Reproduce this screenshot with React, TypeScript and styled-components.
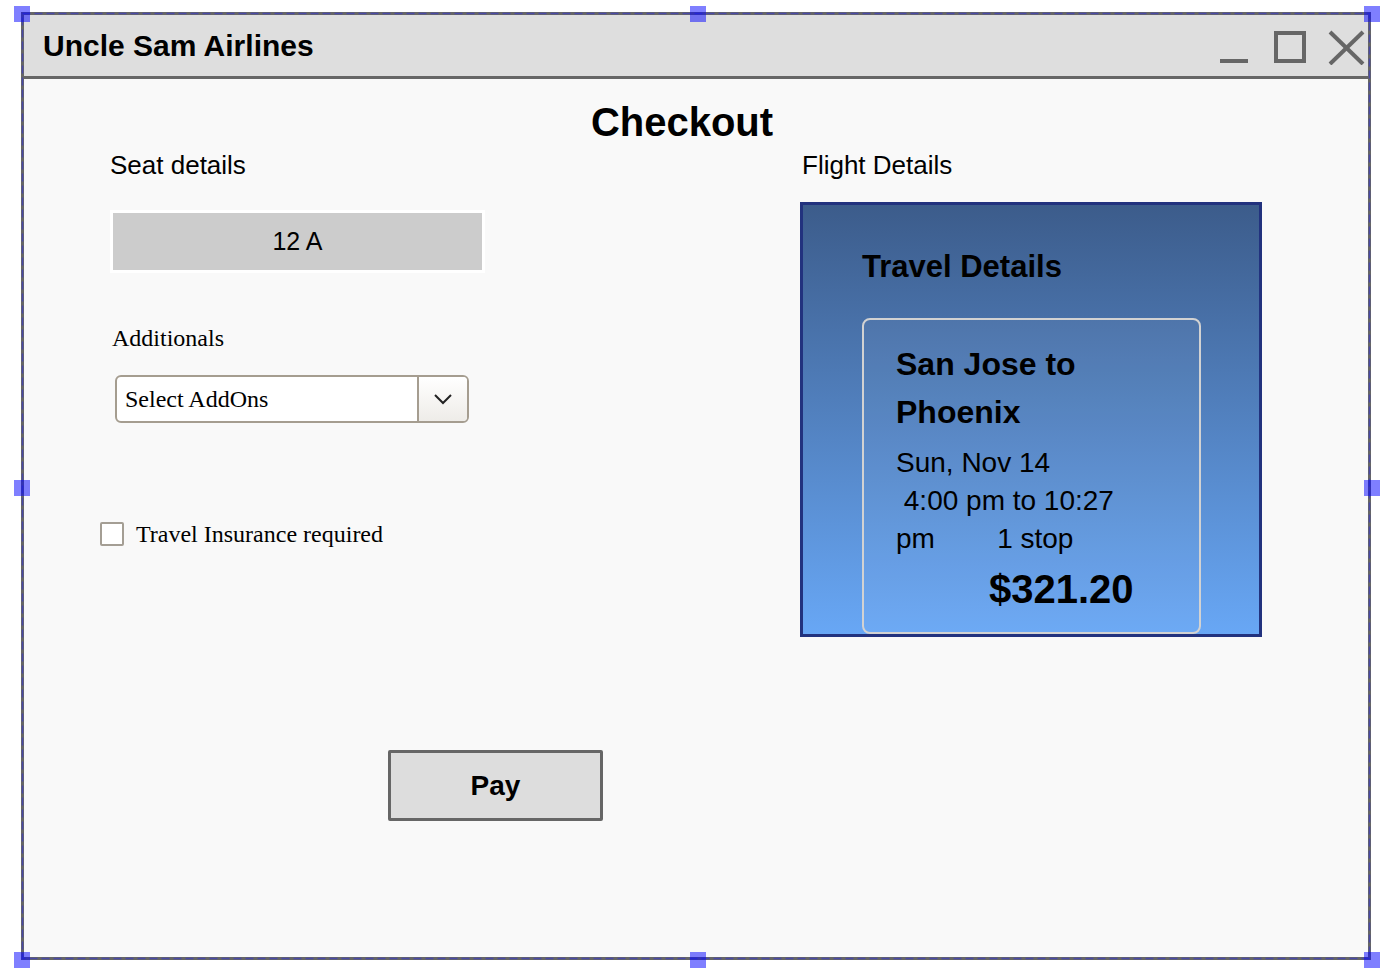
import styled, { createGlobalStyle } from "styled-components";

const GlobalStyle = createGlobalStyle`
    html, body {
        margin: 0;
        padding: 0;
        background-color: #ffffff;
    }
    body {
        padding: 12px 0 14px 21px;
        font-family: "Liberation Sans", Arial, sans-serif;
        color: #000;
    }
`;

const Frame = styled.div`
    position: relative;
    box-sizing: border-box;
    width: 1350px;
    height: 948px;
    border: 3px solid #666;
    background-color: #f9f9f9;
    display: flex;
    flex-direction: column;
`;

const SelectionOutline = styled.svg`
    position: absolute;
    left: -3px;
    top: -3px;
    width: 1350px;
    height: 948px;
    pointer-events: none;
    overflow: visible;
`;

const Handle = styled.div<{ $x: number; $y: number }>`
    position: absolute;
    left: ${(props) => props.$x}px;
    top: ${(props) => props.$y}px;
    width: 16px;
    height: 16px;
    background-color: rgba(0, 0, 255, 0.5);
`;

const TitleBar = styled.div`
    height: 61px;
    display: flex;
    align-items: center;
    justify-content: space-between;
    padding: 0 3px 0 19px;
    background-color: #dedede;
    border-bottom: 3px solid #666;
`;

const AppName = styled.h1`
    margin: 0;
    font-size: 30px;
    font-weight: bold;
    line-height: 34px;
`;

const Controls = styled.svg`
    width: 146px;
    height: 36px;
    margin-top: 2px;
`;

const Heading = styled.h2`
    margin: 21px 28px 0 0;
    font-size: 40px;
    line-height: 45px;
    font-weight: bold;
    text-align: center;
`;

const Columns = styled.div`
    display: grid;
    grid-template-columns: 700px 1fr;
    margin-top: 5px;
    padding-left: 76px;
`;

const LeftColumn = styled.div`
    display: flex;
    flex-direction: column;
    align-items: flex-start;
`;

const RightColumn = styled.div`
    display: flex;
    flex-direction: column;
    align-items: flex-start;
`;

const Label = styled.div<{ $indent: number }>`
    margin-left: ${(props) => props.$indent}px;
    font-size: 26px;
    line-height: 30px;
`;

const SeatBox = styled.div`
    box-sizing: border-box;
    width: 375px;
    height: 63px;
    margin: 30px 0 0 10px;
    border: 3px solid #fff;
    background-color: #cccccc;
    display: flex;
    align-items: center;
    justify-content: center;
    font-size: 25px;
`;

const SerifLabel = styled.div`
    margin: 51px 0 0 12px;
    font-family: "Liberation Serif", "Times New Roman", serif;
    font-size: 24px;
    line-height: 28px;
`;

const SelectBox = styled.div`
    box-sizing: border-box;
    width: 354px;
    height: 48px;
    margin: 23px 0 0 15px;
    display: flex;
    border: 2px solid #a59d90;
    border-radius: 6px;
    background-color: #fff;
    overflow: hidden;
`;

const SelectText = styled.div`
    flex: 1;
    display: flex;
    align-items: center;
    padding-left: 8px;
    font-family: "Liberation Serif", "Times New Roman", serif;
    font-size: 24px;
    border-right: 2px solid #a59d90;
`;

const SelectArrow = styled.div`
    width: 48px;
    display: flex;
    align-items: center;
    justify-content: center;
    background: linear-gradient(#ffffff, #eeece8);
`;

const CheckRow = styled.label`
    display: flex;
    align-items: center;
    gap: 12px;
    margin-top: 97px;
    font-family: "Liberation Serif", "Times New Roman", serif;
    font-size: 24px;
    line-height: 28px;
`;

const CheckBox = styled.input`
    appearance: none;
    box-sizing: border-box;
    width: 24px;
    height: 24px;
    margin: 0;
    border: 2px solid #a49e94;
    border-radius: 2px;
    background-color: #fff;
`;

const PayButton = styled.button`
    box-sizing: border-box;
    width: 215px;
    height: 71px;
    margin: 202px 0 0 288px;
    border: 3px solid #666;
    border-radius: 2px;
    background-color: #dddddd;
    font-family: "Liberation Sans", Arial, sans-serif;
    font-size: 28px;
    font-weight: bold;
    color: #000;
`;

const Panel = styled.div`
    box-sizing: border-box;
    width: 462px;
    height: 435px;
    margin-top: 22px;
    padding: 44px 58px 0 59px;
    border: 3px solid #22327e;
    background: linear-gradient(#3c5c8b, #68a7f5);
    overflow: hidden;
`;

const PanelTitle = styled.h3`
    margin: 0;
    font-size: 31px;
    line-height: 36px;
    font-weight: bold;
`;

const TripCard = styled.div`
    box-sizing: border-box;
    width: 339px;
    margin: 33px 0 0 0;
    padding: 20px 20px 20px 32px;
    border: 2px solid #d2d2d2;
    border-radius: 8px;
    background-color: rgba(255, 255, 255, 0.04);
`;

const Route = styled.div`
    font-size: 32px;
    line-height: 48px;
    font-weight: bold;
`;

const Schedule = styled.div`
    width: 250px;
    margin-top: 8px;
    font-size: 28px;
    line-height: 38px;
    white-space: pre-wrap;
`;

const Price = styled.div`
    margin: 8px 0 0 93px;
    font-size: 40px;
    line-height: 46px;
    font-weight: bold;
`;

const handles = [
    [-10, -9], [666, -9], [1340, -9],
    [-10, 465], [1340, 465],
    [-10, 937], [666, 937], [1340, 937],
];

function App() {
    return (
        <>
            <GlobalStyle />
            <Frame>
                <TitleBar>
                    <AppName>Uncle Sam Airlines</AppName>
                    <Controls viewBox="0 0 146 36">
                        <line x1="1" y1="32" x2="29" y2="32" stroke="#666" strokeWidth="4" />
                        <rect x="57" y="4" width="28" height="28" fill="none" stroke="#666" strokeWidth="4" />
                        <line x1="111" y1="3" x2="144" y2="35" stroke="#666" strokeWidth="4" />
                        <line x1="144" y1="3" x2="111" y2="35" stroke="#666" strokeWidth="4" />
                    </Controls>
                </TitleBar>
                <Heading>Checkout</Heading>
                <Columns>
                    <LeftColumn>
                        <Label $indent={10}>Seat details</Label>
                        <SeatBox>12 A</SeatBox>
                        <SerifLabel>Additionals</SerifLabel>
                        <SelectBox>
                            <SelectText>Select AddOns</SelectText>
                            <SelectArrow>
                                <svg width="20" height="12" viewBox="0 0 20 12">
                                    <polyline points="2,2 10,10 18,2" fill="none" stroke="#222" strokeWidth="2" />
                                </svg>
                            </SelectArrow>
                        </SelectBox>
                        <CheckRow>
                            <CheckBox type="checkbox" />
                            Travel Insurance required
                        </CheckRow>
                        <PayButton>Pay</PayButton>
                    </LeftColumn>
                    <RightColumn>
                        <Label $indent={2}>Flight Details</Label>
                        <Panel>
                            <PanelTitle>Travel Details</PanelTitle>
                            <TripCard>
                                <Route>San Jose to<br />Phoenix</Route>
                                <Schedule>
                                    Sun, Nov 14
                                    <br />
                                    {" 4:00 pm to 10:27 pm        1 stop"}
                                </Schedule>
                                <Price>$321.20</Price>
                            </TripCard>
                        </Panel>
                    </RightColumn>
                </Columns>
                <SelectionOutline>
                    <rect x="1.5" y="1.5" width="1347" height="945" fill="none"
                        stroke="#4a4aa6" strokeWidth="1.5" strokeDasharray="8 4" />
                </SelectionOutline>
                {handles.map(([x, y], i) => (
                    <Handle key={i} $x={x} $y={y} />
                ))}
            </Frame>
        </>
    );
}

export default App;
